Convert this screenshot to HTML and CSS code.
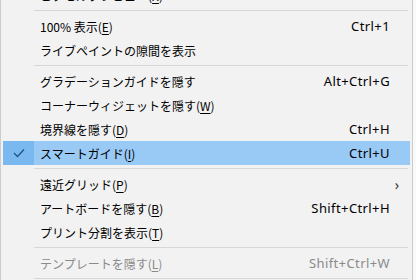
FILE: index.html
```html
<!DOCTYPE html>
<html lang="ja">
<head>
    <meta charset="UTF-8">
    <title>表示メニュー</title>
    <link rel="stylesheet" href="styles.css">
</head>
<body>
    <div class="menu">
        <div class="item">
            <span class="check"></span>
            <span class="label">ピクセルプレビュー(<u>X</u>)</span>
            <span class="key"></span>
            <span class="arrow"></span>
        </div>
        <div class="sep"></div>
        <div class="item">
            <span class="check"></span>
            <span class="label">100% 表示(<u>E</u>)</span>
            <span class="key">Ctrl+1</span>
            <span class="arrow"></span>
        </div>
        <div class="item">
            <span class="check"></span>
            <span class="label">ライブペイントの隙間を表示</span>
            <span class="key"></span>
            <span class="arrow"></span>
        </div>
        <div class="sep"></div>
        <div class="item">
            <span class="check"></span>
            <span class="label">グラデーションガイドを隠す</span>
            <span class="key">Alt+Ctrl+G</span>
            <span class="arrow"></span>
        </div>
        <div class="item">
            <span class="check"></span>
            <span class="label">コーナーウィジェットを隠す(<u>W</u>)</span>
            <span class="key"></span>
            <span class="arrow"></span>
        </div>
        <div class="item">
            <span class="check"></span>
            <span class="label">境界線を隠す(<u>D</u>)</span>
            <span class="key">Ctrl+H</span>
            <span class="arrow"></span>
        </div>
        <div class="item active">
            <span class="check">
                <svg viewBox="0 0 12 10" width="12" height="10">
                    <path d="M1 5 L4.5 8.5 L11 1.5" fill="none" stroke="#1f5383" stroke-width="1.3"/>
                </svg>
            </span>
            <span class="label">スマートガイド(<u>I</u>)</span>
            <span class="key">Ctrl+U</span>
            <span class="arrow"></span>
        </div>
        <div class="sep"></div>
        <div class="item">
            <span class="check"></span>
            <span class="label">遠近グリッド(<u>P</u>)</span>
            <span class="key"></span>
            <span class="arrow">&#x203A;</span>
        </div>
        <div class="item">
            <span class="check"></span>
            <span class="label">アートボードを隠す(<u>B</u>)</span>
            <span class="key">Shift+Ctrl+H</span>
            <span class="arrow"></span>
        </div>
        <div class="item">
            <span class="check"></span>
            <span class="label">プリント分割を表示(<u>T</u>)</span>
            <span class="key"></span>
            <span class="arrow"></span>
        </div>
        <div class="sep"></div>
        <div class="item disabled">
            <span class="check"></span>
            <span class="label">テンプレートを隠す(<u>L</u>)</span>
            <span class="key">Shift+Ctrl+W</span>
            <span class="arrow"></span>
        </div>
        <div class="sep"></div>
    </div>
</body>
</html>
```

FILE: styles.css
```css
*{
    box-sizing: border-box;
}
body{
    margin: 0;
    background-color: #fafafa;
    font-family: "Noto Sans CJK JP", sans-serif;
    font-size: 12px;
    color: #000;
    overflow: hidden;
}
.menu{
    width: 413px;
    margin-top: -18px;
    background-color: #f2f2f2;
    border: 1px solid #cccccc;
    padding: 0 2px;
}
.item{
    display: grid;
    grid-template-columns: 31px 1fr auto 20px;
    align-items: center;
    height: 24px;
}
.item .label{
    padding-left: 6px;
    white-space: nowrap;
}
.item .key{
    font-family: "Noto Sans", sans-serif;
    font-size: 13px;
    letter-spacing: 0.4px;
    text-align: right;
}
.item .arrow{
    font-family: "Noto Sans", sans-serif;
    font-size: 14px;
    color: #333;
    text-align: center;
    padding-right: 6px;
}
.item .check{
    height: 24px;
    display: flex;
    align-items: center;
    justify-content: center;
}
.item u{
    text-underline-offset: 2px;
}
.item.active{
    background-color: #99c9f5;
}
.item.active .check{
    background-color: #7ab9f0;
}
.item.disabled{
    color: #8a8a8a;
}
.sep{
    height: 7px;
    margin-left: 31px;
    margin-right: 2px;
    display: flex;
    align-items: center;
}
.sep::after{
    content: "";
    display: block;
    width: 100%;
    height: 1px;
    background-color: #d7d7d7;
}
```
